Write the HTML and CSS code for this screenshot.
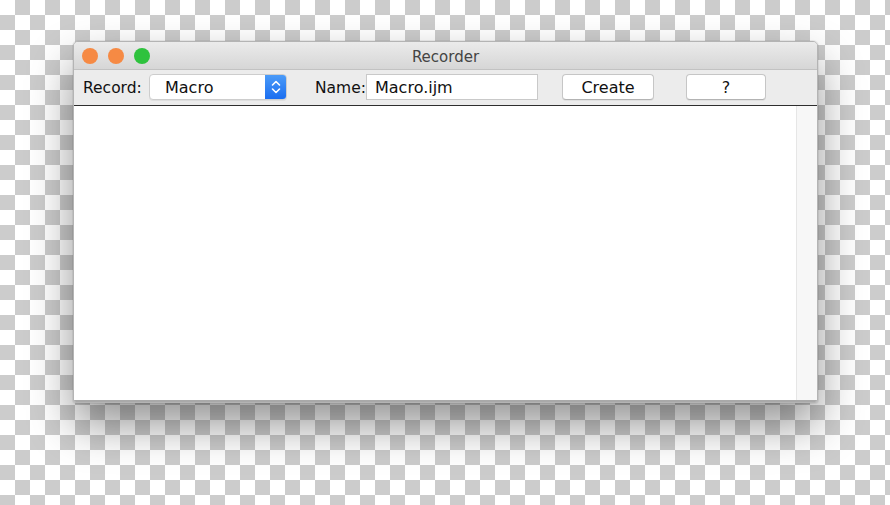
FILE: index.html
```html
<!DOCTYPE html>
<html lang="en">
<head>
    <meta charset="UTF-8">
    <title>Recorder</title>
    <link rel="stylesheet" href="styles.css">
</head>
<body>

    <div class="window">
        <div class="titlebar">
            <div class="lights">
                <span class="light orange"></span>
                <span class="light orange"></span>
                <span class="light green"></span>
            </div>
            <div class="title">Recorder</div>
        </div>

        <div class="toolbar">
            <label class="label record-label" for="recordType">Record:</label>
            <div class="select" id="recordType">
                <span class="select-value">Macro</span>
                <span class="select-arrows">
                    <svg width="12" height="18" viewBox="0 0 12 18">
                        <path d="M2.5 7 L6 3.5 L9.5 7" fill="none" stroke="#fff" stroke-width="1.6" stroke-linecap="round" stroke-linejoin="round"/>
                        <path d="M2.5 11 L6 14.5 L9.5 11" fill="none" stroke="#fff" stroke-width="1.6" stroke-linecap="round" stroke-linejoin="round"/>
                    </svg>
                </span>
            </div>
            <label class="label name-label" for="fileName">Name:</label>
            <div class="field" id="fileName">Macro.ijm</div>
            <button type="button" class="btn create">Create</button>
            <button type="button" class="btn help">?</button>
        </div>

        <div class="content">
            <div class="editor"></div>
            <div class="scrollbar"></div>
        </div>
    </div>

</body>
</html>
```

FILE: styles.css
```css
body {
    margin: 0;
    padding: 41px 0 0 73px;
    height: 505px;
    box-sizing: border-box;
    font-family: 'DejaVu Sans', sans-serif;
    background: repeating-conic-gradient(#cccccc 0 25%, #ffffff 0 50%) 0 0 / 30px 30px;
    overflow: hidden;
}

.window {
    width: 745px;
    height: 362px;
    box-sizing: border-box;
    border: 1px solid #b4b4b4;
    border-radius: 5px 5px 3px 3px;
    background-color: #ececec;
    display: flex;
    flex-direction: column;
    overflow: hidden;
    box-shadow: 0 22px 45px rgba(0, 0, 0, 0.42), 0 0 0 1px rgba(0, 0, 0, 0.06);
}

.titlebar {
    height: 27px;
    position: relative;
    background: linear-gradient(#ebebeb, #d6d6d6);
    border-bottom: 1px solid #c2c2c2;
    display: flex;
    align-items: center;
    justify-content: center;
    flex-shrink: 0;
}

.lights {
    position: absolute;
    left: 8px;
    top: 6px;
    display: flex;
    gap: 10px;
}

.light {
    width: 16px;
    height: 16px;
    border-radius: 50%;
}

.orange {
    background-color: #f68a44;
}

.green {
    background-color: #2ec23d;
}

.title {
    font-size: 15px;
    color: #444;
    padding-top: 2px;
}

.toolbar {
    height: 36px;
    box-sizing: border-box;
    padding: 4px 0 0 9px;
    display: flex;
    align-items: flex-start;
    border-bottom: 1px solid #2e2e2e;
    flex-shrink: 0;
}

.label {
    font-size: 15.5px;
    color: #111;
    line-height: 26px;
    padding-top: 1px;
    white-space: nowrap;
}

.record-label {
    width: 60px;
}

.select {
    margin-left: 6px;
    width: 138px;
    height: 26px;
    box-sizing: border-box;
    background-color: #fff;
    border: 1px solid #cdcdcd;
    border-radius: 4px;
    display: flex;
    overflow: hidden;
    box-shadow: 0 1px 0 rgba(0, 0, 0, 0.06);
}

.select-value {
    flex: 1;
    font-size: 16px;
    color: #111;
    padding: 1px 0 0 15px;
    line-height: 23px;
}

.select-arrows {
    width: 21px;
    background: linear-gradient(#4b9bf8, #1b6ef0);
    display: flex;
    align-items: center;
    justify-content: center;
}

.name-label {
    margin-left: 28px;
    width: 51px;
}

.field {
    width: 172px;
    height: 26px;
    box-sizing: border-box;
    background-color: #fff;
    border: 1px solid #c9c9c9;
    font-size: 16px;
    color: #111;
    padding: 1px 0 0 8px;
    line-height: 23px;
}

.btn {
    height: 26px;
    box-sizing: border-box;
    background-color: #fff;
    border: 1px solid #c6c6c6;
    border-bottom-color: #b3b3b3;
    border-radius: 4px;
    font-family: 'DejaVu Sans', sans-serif;
    font-size: 16px;
    color: #111;
    padding: 1px 0 0;
    line-height: 23px;
    box-shadow: 0 1px 0 rgba(0, 0, 0, 0.05);
}

.create {
    margin-left: 24px;
    width: 92px;
}

.help {
    margin-left: 32px;
    width: 80px;
}

.content {
    flex: 1;
    display: flex;
    border-bottom: 2px solid #a9a9a9;
}

.editor {
    flex: 1;
    background-color: #fff;
}

.scrollbar {
    width: 20px;
    background-color: #f7f7f7;
    border-left: 1px solid #e6e6e6;
}
```
